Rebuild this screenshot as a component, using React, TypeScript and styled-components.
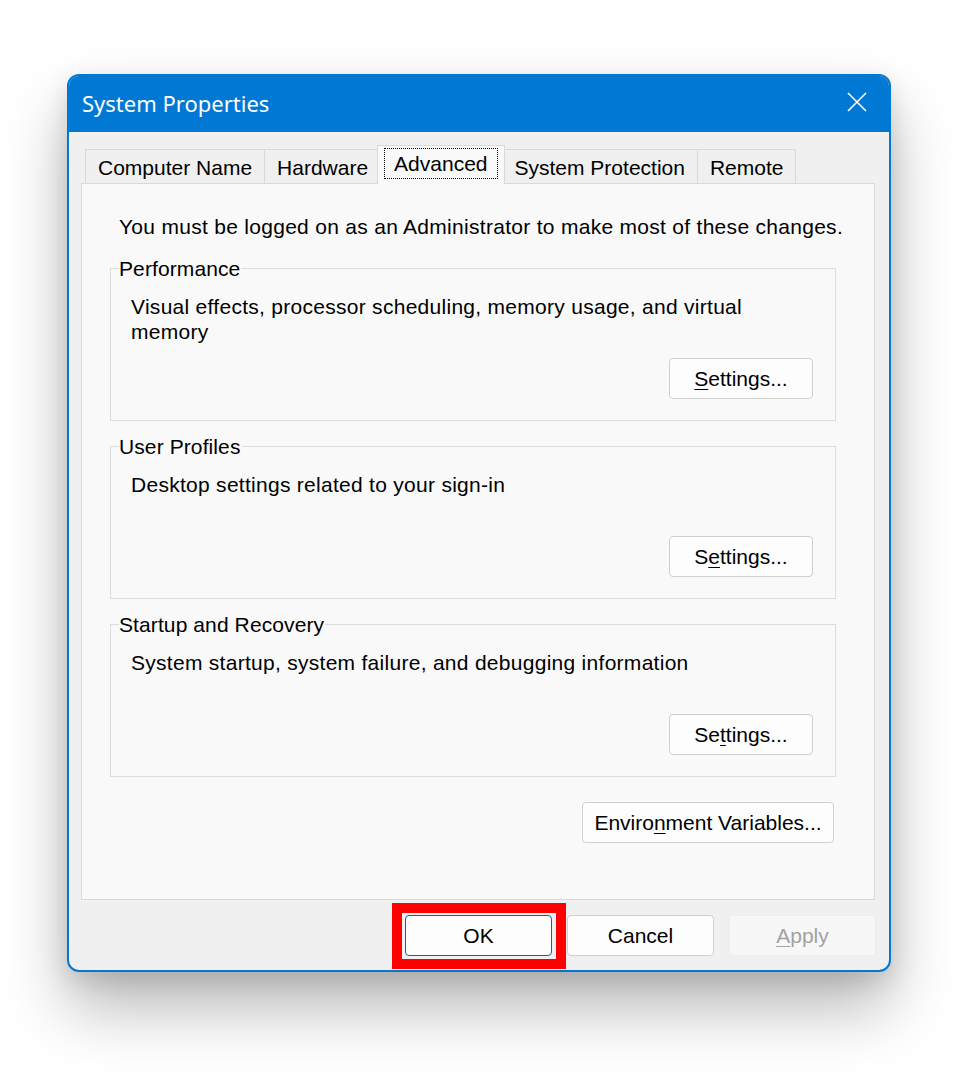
import React from "react";
import styled, { createGlobalStyle } from "styled-components";

const GlobalStyle = createGlobalStyle`
  html, body {
    margin: 0;
    padding: 0;
    background: #ffffff;
  }
  * {
    box-sizing: border-box;
  }
`;

const BLUE = "#0078d4";

const tabs = ["Computer Name", "Hardware", "Advanced", "System Protection", "Remote"];

const groups = [
  {
    title: "Performance",
    text: "Visual effects, processor scheduling, memory usage, and virtual memory",
    before: "",
    key: "S",
    after: "ettings...",
  },
  {
    title: "User Profiles",
    text: "Desktop settings related to your sign-in",
    before: "S",
    key: "e",
    after: "ttings...",
  },
  {
    title: "Startup and Recovery",
    text: "System startup, system failure, and debugging information",
    before: "Se",
    key: "t",
    after: "tings...",
  },
];

export default function App() {
  return (
    <Page>
      <GlobalStyle />
      <Window>
        <TitleBar>
          <Title>System Properties</Title>
          <CloseButton aria-label="Close">
            <svg width="20" height="20" viewBox="0 0 20 20">
              <path d="M1 1 L19 19 M19 1 L1 19" stroke="#ffffff" strokeWidth="1.6" fill="none" />
            </svg>
          </CloseButton>
        </TitleBar>
        <Body>
          <TabStrip>
            {tabs.map((name) => (
              <Tab key={name} $active={name === "Advanced"}>
                {name === "Advanced" ? <FocusRing>{name}</FocusRing> : name}
              </Tab>
            ))}
          </TabStrip>
          <Panel>
            <Notice>You must be logged on as an Administrator to make most of these changes.</Notice>
            {groups.map((g) => (
              <Group key={g.title}>
                <Legend>{g.title}</Legend>
                <GroupInner>
                  <Description>{g.text}</Description>
                  <ButtonRow>
                    <PushButton $width={144}>
                      {g.before}
                      <u>{g.key}</u>
                      {g.after}
                    </PushButton>
                  </ButtonRow>
                </GroupInner>
              </Group>
            ))}
            <EnvRow>
              <PushButton $width={252}>
                Enviro<u>n</u>ment Variables...
              </PushButton>
            </EnvRow>
          </Panel>
          <Footer>
            <Highlight>
              <PushButton $width={147} $primary>
                OK
              </PushButton>
            </Highlight>
            <PushButton $width={147}>Cancel</PushButton>
            <PushButton $width={147} $disabled>
              <u>A</u>pply
            </PushButton>
          </Footer>
        </Body>
      </Window>
    </Page>
  );
}

const Page = styled.div`
  width: 974px;
  height: 1089px;
  padding: 74px 0 0 67px;
  background: #ffffff;
`;

const Window = styled.div`
  width: 824px;
  height: 898px;
  display: flex;
  flex-direction: column;
  border: 2px solid ${BLUE};
  border-radius: 12px;
  overflow: hidden;
  background: #f0f0f0;
  box-shadow: 0 36px 64px rgba(0, 0, 0, 0.28), 0 8px 24px rgba(0, 0, 0, 0.12);
`;

const TitleBar = styled.div`
  height: 56px;
  flex: none;
  display: flex;
  align-items: center;
  justify-content: space-between;
  background: ${BLUE};
  padding: 0 22px 0 13px;
`;

const Title = styled.div`
  color: #ffffff;
  font-family: "Segoe UI", "Noto Sans", sans-serif;
  font-size: 22px;
  line-height: 1;
  margin-top: -2px;
`;

const CloseButton = styled.div`
  width: 20px;
  height: 20px;
  display: flex;
  margin-top: -4px;
`;

const Body = styled.div`
  flex: 1;
  display: flex;
  flex-direction: column;
  padding: 14px 14px 0 12px;
  font-family: "Liberation Sans", Arial, sans-serif;
  font-size: 21px;
  color: #000000;
`;

const TabStrip = styled.div`
  display: flex;
  align-items: flex-end;
  padding-left: 4px;
  height: 38px;
  position: relative;
  z-index: 1;
  margin-bottom: -1px;
`;

const Tab = styled.div<{ $active?: boolean }>`
  height: ${(p) => (p.$active ? "39px" : "35px")};
  padding: ${(p) => (p.$active ? "0 6px" : "2px 12px 0")};
  margin: ${(p) => (p.$active ? "0 -2px 0 -4px" : "0")};
  display: flex;
  align-items: center;
  justify-content: center;
  background: ${(p) => (p.$active ? "#f9f9f9" : "#f0f0f0")};
  border: 1px solid #d9d9d9;
  border-bottom: ${(p) => (p.$active ? "none" : "1px solid #d9d9d9")};
  border-left: ${(p) => (p.$active ? "1px solid #d9d9d9" : "none")};
  position: relative;
  z-index: ${(p) => (p.$active ? 2 : 0)};
  white-space: nowrap;
  line-height: 1;

  &:first-child {
    border-left: 1px solid #d9d9d9;
  }
`;

const FocusRing = styled.span`
  display: flex;
  align-items: center;
  height: 31px;
  padding: 0 9px;
  margin-top: -3px;
  border: 1px dotted #000000;
`;

const Panel = styled.div`
  height: 717px;
  flex: none;
  background: #f9f9f9;
  border: 1px solid #d9d9d9;
  padding: 30px 38px 0 28px;
  display: flex;
  flex-direction: column;
`;

const Notice = styled.div`
  line-height: 25px;
  padding-left: 9px;
  margin-bottom: 17px;
  white-space: nowrap;
  letter-spacing: 0.29px;
`;

const Group = styled.fieldset`
  margin: 0 0 13px 0;
  padding: 0;
  height: 165px;
  border: 1px solid #dcdcdc;
  min-inline-size: 0;
`;

const Legend = styled.legend`
  margin-left: 8px;
  padding: 0 1px 0 0;
  line-height: 25px;
  letter-spacing: 0.1px;
`;

const GroupInner = styled.div`
  height: 139px;
  display: flex;
  flex-direction: column;
  padding: 13px 22px 21px 20px;
`;

const Description = styled.div`
  line-height: 25px;
  max-width: 650px;
  letter-spacing: 0.28px;
`;

const ButtonRow = styled.div`
  margin-top: auto;
  display: flex;
  justify-content: flex-end;
`;

const EnvRow = styled.div`
  display: flex;
  justify-content: flex-end;
  margin-top: 12px;
  margin-right: 2px;
`;

const PushButton = styled.div<{ $width: number; $primary?: boolean; $disabled?: boolean }>`
  width: ${(p) => p.$width}px;
  height: 41px;
  flex: none;
  display: flex;
  align-items: center;
  justify-content: center;
  border-radius: 4px;
  font-family: "Liberation Sans", Arial, sans-serif;
  font-size: 21px;
  white-space: nowrap;
  background: ${(p) => (p.$disabled ? "#f7f7f7" : "#fdfdfd")};
  color: ${(p) => (p.$disabled ? "#a2a2a2" : "#000000")};
  border: 1px solid
    ${(p) => (p.$primary ? "#0067c0" : p.$disabled ? "#eeeeee" : "#d0d0d0")};

  u {
    text-underline-offset: 3px;
    text-decoration-thickness: 1px;
  }
`;

const Footer = styled.div`
  display: flex;
  justify-content: flex-end;
  gap: 15px;
  padding-top: 15px;
  margin-right: -1px;
`;

const Highlight = styled.div`
  position: relative;

  &::after {
    content: "";
    position: absolute;
    top: -12px;
    left: -13px;
    right: -14px;
    bottom: -13px;
    border: 10px solid #ff0000;
    pointer-events: none;
  }
`;
